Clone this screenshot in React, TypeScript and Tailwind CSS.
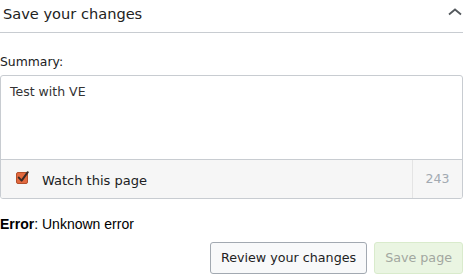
import React from 'react';

const CheckIcon = () => (
    <svg width="16" height="15" viewBox="0 0 16 15" className="block -mt-[4px]">
        <rect x="0.5" y="2.5" width="11" height="11" rx="1.5" fill="#e2693f" stroke="#b4502c" />
        <path d="M2.8 7.6 L5.6 10.6 L11.8 2.2" fill="none" stroke="#3a2a26" strokeWidth="2" strokeLinecap="round" strokeLinejoin="round" />
    </svg>
);

const App = () => {
    return (
        <div className="w-[463px] h-[274px] overflow-hidden bg-white text-[#202122] font-['DejaVu_Sans',sans-serif]">
            {/* Header */}
            <div className="h-[33px] border-b border-[#c8ccd1] flex justify-between items-start">
                <h2 className="pl-[3px] pt-[5px] text-[14.6px] leading-[17px] text-[#222]">Save your changes</h2>
                <svg width="14" height="8" viewBox="0 0 14 8" className="mt-[8px] mr-[1px]">
                    <path d="M1 6.5 L7 1.5 L13 6.5" fill="none" stroke="#54595d" strokeWidth="1.8" />
                </svg>
            </div>

            <label className="block mt-[21px] text-[12.4px] leading-[15px]">Summary:</label>

            {/* Summary box */}
            <div className="mt-[6px] border border-[#c8ccd1] rounded-[3px] overflow-hidden">
                <div className="h-[83px] pt-[8px] pl-[9px] text-[12.5px] leading-[15px] text-[#333]">Test with VE</div>
                <div className="h-[39px] border-t border-[#c8ccd1] bg-[#f6f6f6] flex items-stretch">
                    <div className="flex-1 flex items-center pl-[15px]">
                        <CheckIcon />
                        <span className="ml-[10px] mt-[2px] text-[13px] leading-[15px]">Watch this page</span>
                    </div>
                    <div className="w-[50px] border-l border-[#e4e4e4] flex items-center justify-center text-[12.5px] text-[#a2a9b1]">
                        243
                    </div>
                </div>
            </div>

            <p className="mt-[17px] text-[14px] leading-[16px] font-['Liberation_Sans',Arial,sans-serif] text-black">
                <b>Error</b>: Unknown error
            </p>

            <div className="mt-[10px] flex justify-end gap-[7px]">
                <button className="h-[32px] px-[10px] border border-[#a2a9b1] rounded-[3px] bg-[#f8f9fa] text-[12.7px] text-[#222]">
                    Review your changes
                </button>
                <button className="h-[32px] px-[10px] border border-[#d9ebcc] rounded-[3px] bg-[#eaf5e2] text-[12.7px] text-[#a2a7a0]">
                    Save page
                </button>
            </div>
        </div>
    );
};

export default App;
